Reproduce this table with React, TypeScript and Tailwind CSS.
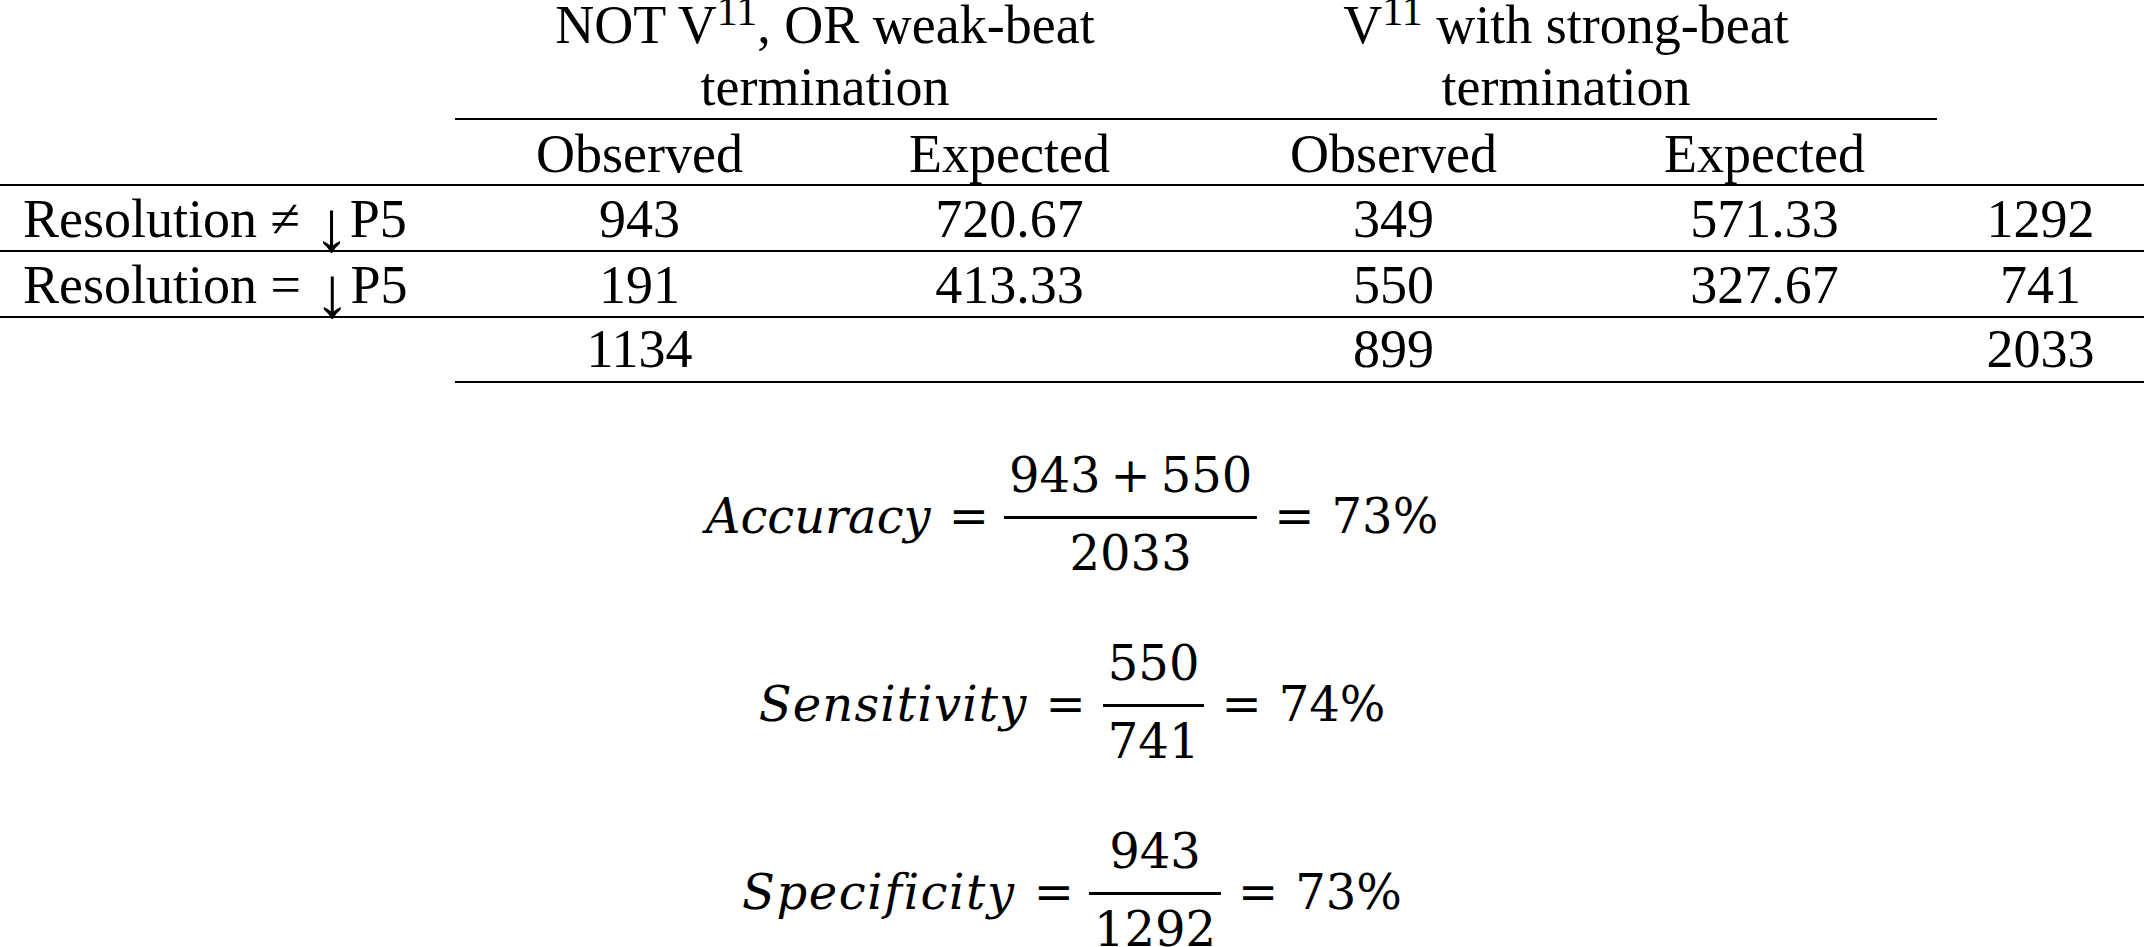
import React from "react";

// Contingency table + the three derived measures under it.

const grid = "grid grid-cols-[455px_369px_371px_397px_345px_207px]";

function Frac(props: { num: React.ReactNode; den: React.ReactNode }) {
  return (
    <div className="flex flex-col items-stretch">
      <div className="mb-[17px] px-[5px] text-center leading-[48px] whitespace-nowrap">{props.num}</div>
      <div className="h-[3px] bg-black" />
      <div className="mt-[10px] px-[5px] text-center leading-[48px]">{props.den}</div>
    </div>
  );
}

function Eq() {
  return <span className="pt-[4px]">=</span>;
}

type Row = { label: React.ReactNode; cells: string[] };

const Arrow = () => (
  <span className="relative top-[14px] text-[72px] leading-[0]">↓</span>
);

const rows: Row[] = [
  { label: <>Resolution ≠ <Arrow />P5</>, cells: ["943", "720.67", "349", "571.33", "1292"] },
  { label: <>Resolution = <Arrow />P5</>, cells: ["191", "413.33", "550", "327.67", "741"] },
];

export default function App() {
  return (
    <div className="h-[947px] w-[2144px] overflow-hidden bg-white font-['Liberation_Serif',serif] text-[54px] text-black">
      {/* Table */}
      <div className={grid}>
        {/* spanner headers */}
        <div className="h-[120px]" />
        <div className="col-span-2 flex h-[120px] flex-col justify-end border-b-2 border-black text-center leading-[62px]">
          <div>
            NOT V<sup className="top-[-18px] text-[42px]">11</sup>, OR weak-beat
          </div>
          <div>termination</div>
        </div>
        <div className="col-span-2 flex h-[120px] flex-col justify-end border-b-2 border-black text-center leading-[62px]">
          <div>
            V<sup className="top-[-18px] text-[42px]">11</sup> with strong-beat
          </div>
          <div>termination</div>
        </div>
        <div className="h-[120px]" />

        {/* sub headers */}
        <div className="h-[66px] border-b-2 border-black" />
        {["Observed", "Expected", "Observed", "Expected"].map((h, i) => (
          <div key={i} className="h-[66px] border-b-2 border-black pt-[4px] text-center leading-[60px]">
            {h}
          </div>
        ))}
        <div className="h-[66px] border-b-2 border-black" />

        {/* body */}
        {rows.map((r, ri) => (
          <React.Fragment key={ri}>
            <div className="h-[66px] whitespace-nowrap border-b-2 border-black pl-[23px] pt-[3px] leading-[60px]">
              {r.label}
            </div>
            {r.cells.map((c, i) => (
              <div key={i} className="h-[66px] border-b-2 border-black pt-[3px] text-center leading-[60px]">
                {c}
              </div>
            ))}
          </React.Fragment>
        ))}

        {/* totals */}
        <div className="h-[65px]" />
        {["1134", "", "899", "", "2033"].map((c, i) => (
          <div key={i} className="h-[65px] border-b-2 border-black pt-[1px] text-center leading-[60px]">
            {c}
          </div>
        ))}
      </div>

      {/* Formulas */}
      <div className="flex flex-col gap-[62px] pt-[68px] font-['DejaVu_Serif',serif] text-[48px]">
        <div className="flex items-center justify-center">
          <span className="mr-[18px] pt-[4px] italic">Accuracy</span>
          <Eq />
          <span className="ml-[15px]" />
          <Frac num={<>943<span className="mx-[10px]">+</span>550</>} den="2033" />
          <span className="mr-[17px]" />
          <Eq />
          <span className="ml-[17px] pt-[4px]">73%</span>
        </div>
        <div className="flex items-center justify-center">
          <span className="mr-[18px] pt-[4px] italic tracking-[1.2px]">Sensitivity</span>
          <Eq />
          <span className="ml-[17px]" />
          <Frac num="550" den="741" />
          <span className="mr-[17px]" />
          <Eq />
          <span className="ml-[17px] pt-[4px]">74%</span>
        </div>
        <div className="flex items-center justify-center">
          <span className="mr-[18px] pt-[4px] italic tracking-[1.6px]">Specificity</span>
          <Eq />
          <span className="ml-[15px]" />
          <Frac num="943" den="1292" />
          <span className="mr-[17px]" />
          <Eq />
          <span className="ml-[17px] pt-[4px]">73%</span>
        </div>
      </div>
    </div>
  );
}
